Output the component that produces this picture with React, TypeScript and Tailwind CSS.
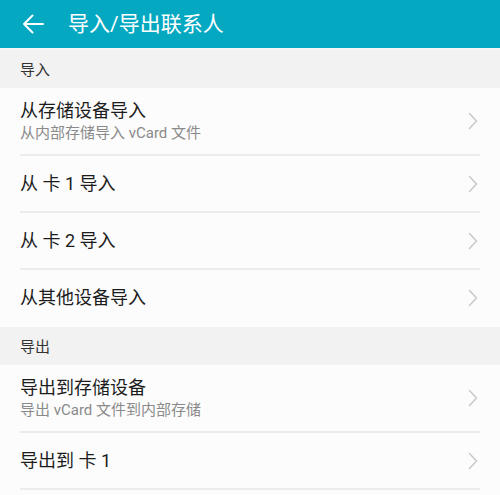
import React from "react";

const font = { fontFamily: 'Roboto, "Noto Sans CJK SC", "Noto Sans", sans-serif' };

function Chevron() {
  return (
    <svg width="12" height="18" viewBox="0 0 12 18" className="shrink-0">
      <path d="M2.5 1.5 L9.5 9 L2.5 16.5" fill="none" stroke="#c8c8c8" strokeWidth="1.5" strokeLinecap="round" strokeLinejoin="round" />
    </svg>
  );
}

function Row({ title, sub, divider = true }: { title: string; sub?: string; divider?: boolean }) {
  return (
    <div className={`flex flex-col ${sub ? "h-[68px]" : "h-[57px]"}`}>
      <div className="flex flex-1 items-center pl-5 pr-[21px]">
        <div className="flex flex-1 flex-col">
          <div className="text-[18px] leading-[22px] text-[#1c1c1c]">{title}</div>
          {sub && <div className="mt-[2px] text-[15px] leading-[18px] text-[#8a8a8a]">{sub}</div>}
        </div>
        <Chevron />
      </div>
      <div className={`mx-5 h-[2px] ${divider ? "bg-[#ececec]" : "bg-transparent"}`} />
    </div>
  );
}

function Section({ label }: { label: string }) {
  return (
    <div className="flex h-[38px] items-center bg-[#f2f2f2] pl-5 pt-[3px] text-[15px] text-[#333333]">{label}</div>
  );
}

export default function App() {
  return (
    <div className="h-[495px] w-[500px] overflow-hidden bg-[#fcfcfc]" style={font}>
      <div className="flex h-[48px] items-center bg-[#04a8c1] pl-[21px]">
        <svg width="24" height="22" viewBox="0 0 24 22">
          <path d="M22 11 H3 M11.5 2.5 L3 11 L11.5 19.5" fill="none" stroke="#ffffff" strokeWidth="2" strokeLinecap="round" strokeLinejoin="round" />
        </svg>
        <div className="ml-[23px] text-[21px] leading-[26px] text-white">导入/导出联系人</div>
      </div>
      <div className="h-[2px] bg-[#f7f7f7]" />
      <Section label="导入" />
      <Row title="从存储设备导入" sub="从内部存储导入 vCard 文件" />
      <Row title="从 卡 1 导入" />
      <Row title="从 卡 2 导入" />
      <Row title="从其他设备导入" divider={false} />
      <Section label="导出" />
      <Row title="导出到存储设备" sub="导出 vCard 文件到内部存储" />
      <Row title="导出到 卡 1" />
    </div>
  );
}
